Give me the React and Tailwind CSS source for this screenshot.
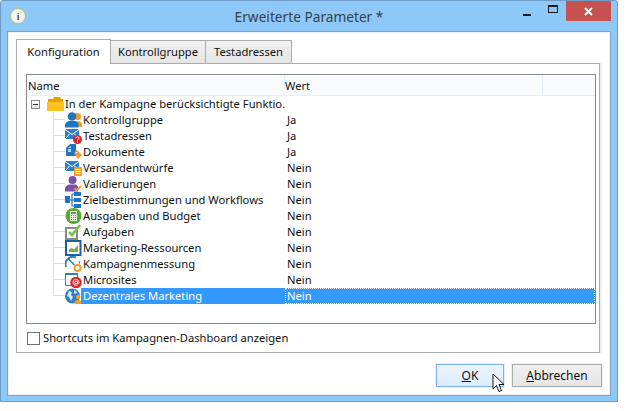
import React from "react";

const Blue = "#2f7fc8";
const Orange = "#f39c1f";

function Icon({ children }) {
  return (
    <svg width="17" height="16" viewBox="0 0 17 16" className="-mr-px shrink-0">
      {children}
    </svg>
  );
}

const Envelope = () => (
  <>
    <path d="M0 1h14v10H0z" fill={Blue} />
    <path d="M0 1.500l7 5 7-5M0 11l5-5.500M14 11L9 5.500" stroke="#fff" strokeWidth="1" fill="none" />
  </>
);

const icons = {
  kontroll: (
    <Icon>
      <circle cx="12.500" cy="4.500" r="3.600" fill={Orange} />
      <path d="M9 15c0-4 1-6 3.500-6s4 1 4.500 3v3z" fill={Orange} />
      <circle cx="7" cy="4.500" r="4.300" fill="#1f74c4" />
      <path d="M0 15.500v-3c0-2 2.500-3 4-3.500h6c1.500.5 3.500 1.500 3.500 3.500v3z" fill="#1f74c4" />
    </Icon>
  ),
  test: (
    <Icon>
      <Envelope />
      <circle cx="12.500" cy="11.500" r="4.500" fill="#d8252b" />
      <path d="M11 10.300c0-2 3-2 3 0 0 1-1.500 1-1.500 2.200M12.500 13.500v1" stroke="#fff" strokeWidth="1" fill="none" />
    </Icon>
  ),
  dok: (
    <Icon>
      <path d="M1 4l4-4h6v12H1z" fill="#1f74c4" />
      <path d="M3 4h3V2L3 4zM3 5h3v3H3z" fill="#bcd8f0" />
      <path d="M9 9l3-3 5 5-4 4z" fill={Orange} />
      <circle cx="11.500" cy="8.500" r=".8" fill="#fff" />
    </Icon>
  ),
  versand: (
    <Icon>
      <Envelope />
      <path d="M9 7h8v9H9z" fill={Orange} />
      <path d="M10.500 9.500h5M10.500 11.500h5M10.500 13.500h5" stroke="#fff" strokeWidth="1" />
    </Icon>
  ),
  valid: (
    <Icon>
      <circle cx="7.500" cy="4" r="4" fill="#7b4fa6" />
      <path d="M0 15.500v-3c0-2 3-3.500 4-4h7c1 .5 2 1.500 2 3v4z" fill="#7b4fa6" />
      <path d="M9.500 12.500l2 2 4.500-4.500" stroke={Orange} strokeWidth="1.800" fill="none" />
    </Icon>
  ),
  ziel: (
    <Icon>
      <path d="M0 4h5v7H0z" fill="#1f74c4" />
      <path d="M9 0h7v4H9zM9 6h7v4H9zM9 12h7v4H9z" fill="#1f74c4" />
      <path d="M7 2v12M5 8h4M7 2h2M7 14h2" stroke="#1f74c4" strokeWidth="1.200" />
    </Icon>
  ),
  ausgaben: (
    <Icon>
      <circle cx="8.500" cy="8" r="8" fill="#5aa63a" />
      <path d="M5 3h7v10H5z" fill="#e4f1da" />
      <path d="M6 4h5v2H6z" fill="#5aa63a" />
      <path d="M6 7.500h5M6 9.500h5M6 11.500h5" stroke="#5aa63a" strokeWidth="1" strokeDasharray="1 1" />
    </Icon>
  ),
  aufgaben: (
    <Icon>
      <path d="M1 4h11v11H1z" fill="#fff" stroke="#8a8a8a" strokeWidth="2" />
      <path d="M4 8l3 3 8-10" stroke="#7dc242" strokeWidth="2.600" fill="none" />
    </Icon>
  ),
  marketing: (
    <Icon>
      <path d="M1 1h14.500v14H1z" fill="#fff" stroke="#1c5f9f" strokeWidth="2" />
      <path d="M4 12V9.500l3-1.500 2 1.500L13 5v7z" fill="#6cb33f" />
    </Icon>
  ),
  messung: (
    <Icon>
      <path d="M1 11A7.500 7.500 0 0 1 11 1.500" stroke="#2f7fc8" strokeWidth="2" fill="none" />
      <path d="M3.500 3l6 6" stroke="#2f7fc8" strokeWidth="1.500" />
      <path d="M14.500 5.500v2" stroke="#2f7fc8" strokeWidth="1.500" />
      <circle cx="12.500" cy="12" r="3" fill="#fff" stroke={Orange} strokeWidth="2" />
    </Icon>
  ),
  micro: (
    <Icon>
      <path d="M.5 1.500h12v12H.5z" fill="#fff" stroke="#2f7fc8" strokeWidth="1" />
      <path d="M0 1h13v2H0z" fill="#2f7fc8" />
      <circle cx="11" cy="10.500" r="5.800" fill="#d8252b" />
      <circle cx="11" cy="10.500" r="1.400" fill="none" stroke="#fff" strokeWidth=".9" />
      <path d="M12.500 9v2.500c0 1 1.500 .5 1.500-1A3 3 0 1 0 12.500 13" fill="none" stroke="#fff" strokeWidth=".9" />
    </Icon>
  ),
  dezentral: (
    <Icon>
      <circle cx="7.500" cy="8" r="7.500" fill="#2f7fc8" />
      <path d="M4 3l3 1-1 3 2 2-2 4-2-4-2-1zM9 2l3 2-1 2-2-1z" fill="#d9e9f7" />
      <circle cx="13" cy="9" r="2.300" fill={Orange} />
      <path d="M9.500 16v-2c0-1 1.500-2 3.500-2s3.500 1 3.500 2v2z" fill={Orange} />
    </Icon>
  ),
};

const rows = [
  { icon: "kontroll", name: "Kontrollgruppe", wert: "Ja" },
  { icon: "test", name: "Testadressen", wert: "Ja" },
  { icon: "dok", name: "Dokumente", wert: "Ja" },
  { icon: "versand", name: "Versandentwürfe", wert: "Nein" },
  { icon: "valid", name: "Validierungen", wert: "Nein" },
  { icon: "ziel", name: "Zielbestimmungen und Workflows", wert: "Nein" },
  { icon: "ausgaben", name: "Ausgaben und Budget", wert: "Nein" },
  { icon: "aufgaben", name: "Aufgaben", wert: "Nein" },
  { icon: "marketing", name: "Marketing-Ressourcen", wert: "Nein" },
  { icon: "messung", name: "Kampagnenmessung", wert: "Nein" },
  { icon: "micro", name: "Microsites", wert: "Nein" },
  { icon: "dezentral", name: "Dezentrales Marketing", wert: "Nein", selected: true },
];

function TreeRow({ row, last }) {
  return (
    <div className="flex h-4 items-stretch">
      <div className="flex w-[258px] items-stretch pl-[26px]">
        <div className="flex w-3 shrink-0 flex-col">
          <div className="h-2 border-b border-l border-[#dcdcdc]" />
          <div className={last ? "h-2" : "h-2 border-l border-[#dcdcdc]"} />
        </div>
        {icons[row.icon]}
        <div className={`flex-1 pl-[2px] leading-4 ${row.selected ? "bg-[#3399ff] text-white" : ""}`}>{row.name}</div>
      </div>
      <div
        className={`flex-1 pl-px leading-[14px] ${
          row.selected ? "border border-dotted border-white bg-[#3399ff] text-white" : "border border-transparent"
        }`}
      >
        {row.wert}
      </div>
    </div>
  );
}

export default function App() {
  return (
    <div className="h-[411px] w-[632px] bg-white font-['Noto_Sans',sans-serif] text-[11.2px] text-[#111]">
      <div className="relative h-[402px] w-[618px] rounded-t-[3px] border border-[#6f9cc6] bg-[#8ec8f8] px-[6px]">
        {/* title bar */}
        <div className="grid h-[30px] grid-cols-[1fr_auto_1fr]">
          <div className="flex items-center pl-[3px]">
            <div className="flex h-4 w-4 items-center justify-center rounded-full border border-[#a6c96a] bg-[#f4f4ee] text-[9px] font-bold leading-none text-[#444]">
              i
            </div>
          </div>
          <div className="pt-[6px] text-[13.7px] leading-5 text-[#3a3f44]">Erweiterte Parameter *</div>
          <div className="flex items-start justify-end">
            <div className="flex h-[15px] w-[26px] items-center justify-center pt-[12px]">
              <div className="h-[2px] w-2 bg-[#1a1a1a]" />
            </div>
            <div className="flex h-5 w-[26px] items-center justify-center pb-[5px]">
              <div className="h-2 w-[10px] border border-t-2 border-[#1a1a1a]" />
            </div>
            <div className="flex h-5 w-[45px] items-center justify-center bg-[#c75050]">
              <svg width="9" height="9" viewBox="0 0 9 9">
                <path d="M1 1l7 7M8 1L1 8" stroke="#fff" strokeWidth="2" />
              </svg>
            </div>
          </div>
        </div>

        {/* client area */}
        <div className="h-[365px] border border-[#7fa3c2] bg-white">
          <div className="h-full border border-[#f0f0f0] pl-[7px] pr-[9px] pt-[6px]">
            {/* tabs */}
            <div className="flex h-6 items-end">
              <div className="z-10 -mb-px flex h-[25px] w-[95px] items-center justify-center border border-b-0 border-[#acacac] bg-white">
                Konfiguration
              </div>
              <div className="flex h-[23px] w-[95px] items-center justify-center border border-b-0 border-l-0 border-[#acacac] bg-gradient-to-b from-[#f0f0f0] to-[#e5e5e5]">
                Kontrollgruppe
              </div>
              <div className="flex h-[23px] w-[86px] items-center justify-center border border-b-0 border-l-0 border-[#acacac] bg-gradient-to-b from-[#f0f0f0] to-[#e5e5e5]">
                Testadressen
              </div>
            </div>

            {/* tab panel */}
            <div className="h-[290px] border border-[#acacac] pl-[9px] pr-[3px] pt-[10px] shadow-[2px_0_0_#f0f0f0]">
              <div className="h-[250px] overflow-hidden border border-[#828790]">
                <div className="flex h-[21px] border-b border-[#e5eef8] bg-[#fafbfd]">
                  <div className="w-[258px] border-r border-[#e5eef8] pl-px leading-[22px]">Name</div>
                  <div className="w-[258px] border-r border-[#e5eef8] leading-[22px]">Wert</div>
                </div>
                <div className="flex h-4 items-center pl-1">
                  <div className="flex h-[9px] w-[9px] items-center justify-center border border-[#8a8a8a] bg-gradient-to-b from-white to-[#e6e6e6]">
                    <div className="h-px w-[5px] bg-[#333]" />
                  </div>
                  <svg width="17" height="14" viewBox="0 0 17 14" className="ml-[7px] shrink-0">
                    <path d="M1 2h5l1-2h6l1 2h2v3H1z" fill="#e8a200" />
                    <path d="M0 5h17v9H0z" fill="#fdc21f" />
                  </svg>
                  <div className="w-[222px] whitespace-nowrap pl-px leading-4">
                    In der Kampagne berücksichtigte Funktio.
                  </div>
                </div>
                {rows.map((row, i) => (
                  <TreeRow key={row.name} row={row} last={i === rows.length - 1} />
                ))}
              </div>
              <label className="mt-[6px] flex items-center gap-[3px] pl-px">
                <span className="h-[13px] w-[13px] border border-[#707070] bg-white" />
                <span className="leading-4">Shortcuts im Kampagnen-Dashboard anzeigen</span>
              </label>
            </div>

            {/* buttons */}
            <div className="-mr-[2px] mt-[11px] flex justify-end gap-2">
              <div className="flex h-[23px] w-[68px] items-center justify-center border border-[#7eb4ea] bg-gradient-to-b from-[#ecf4fc] to-[#dcecfc] text-[12px] shadow-[0_0_0_1px_#e6eff9]">
                <span className="underline">O</span>K
              </div>
              <div className="flex h-[23px] w-[90px] items-center justify-center border border-[#acacac] bg-gradient-to-b from-[#f0f0f0] to-[#e5e5e5] text-[12px] shadow-[0_0_0_1px_#f0f0f0]">
                <span className="underline">A</span>bbrechen
              </div>
            </div>
          </div>
        </div>

        {/* mouse pointer */}
        <svg width="13" height="20" viewBox="0 0 13 20" className="absolute left-[491px] top-[372px]">
          <path d="M1 1v15l3.500-3.500 2.500 6 2.500-1-2.500-6H12z" fill="#fff" stroke="#111" strokeWidth="1" />
        </svg>
      </div>
    </div>
  );
}
